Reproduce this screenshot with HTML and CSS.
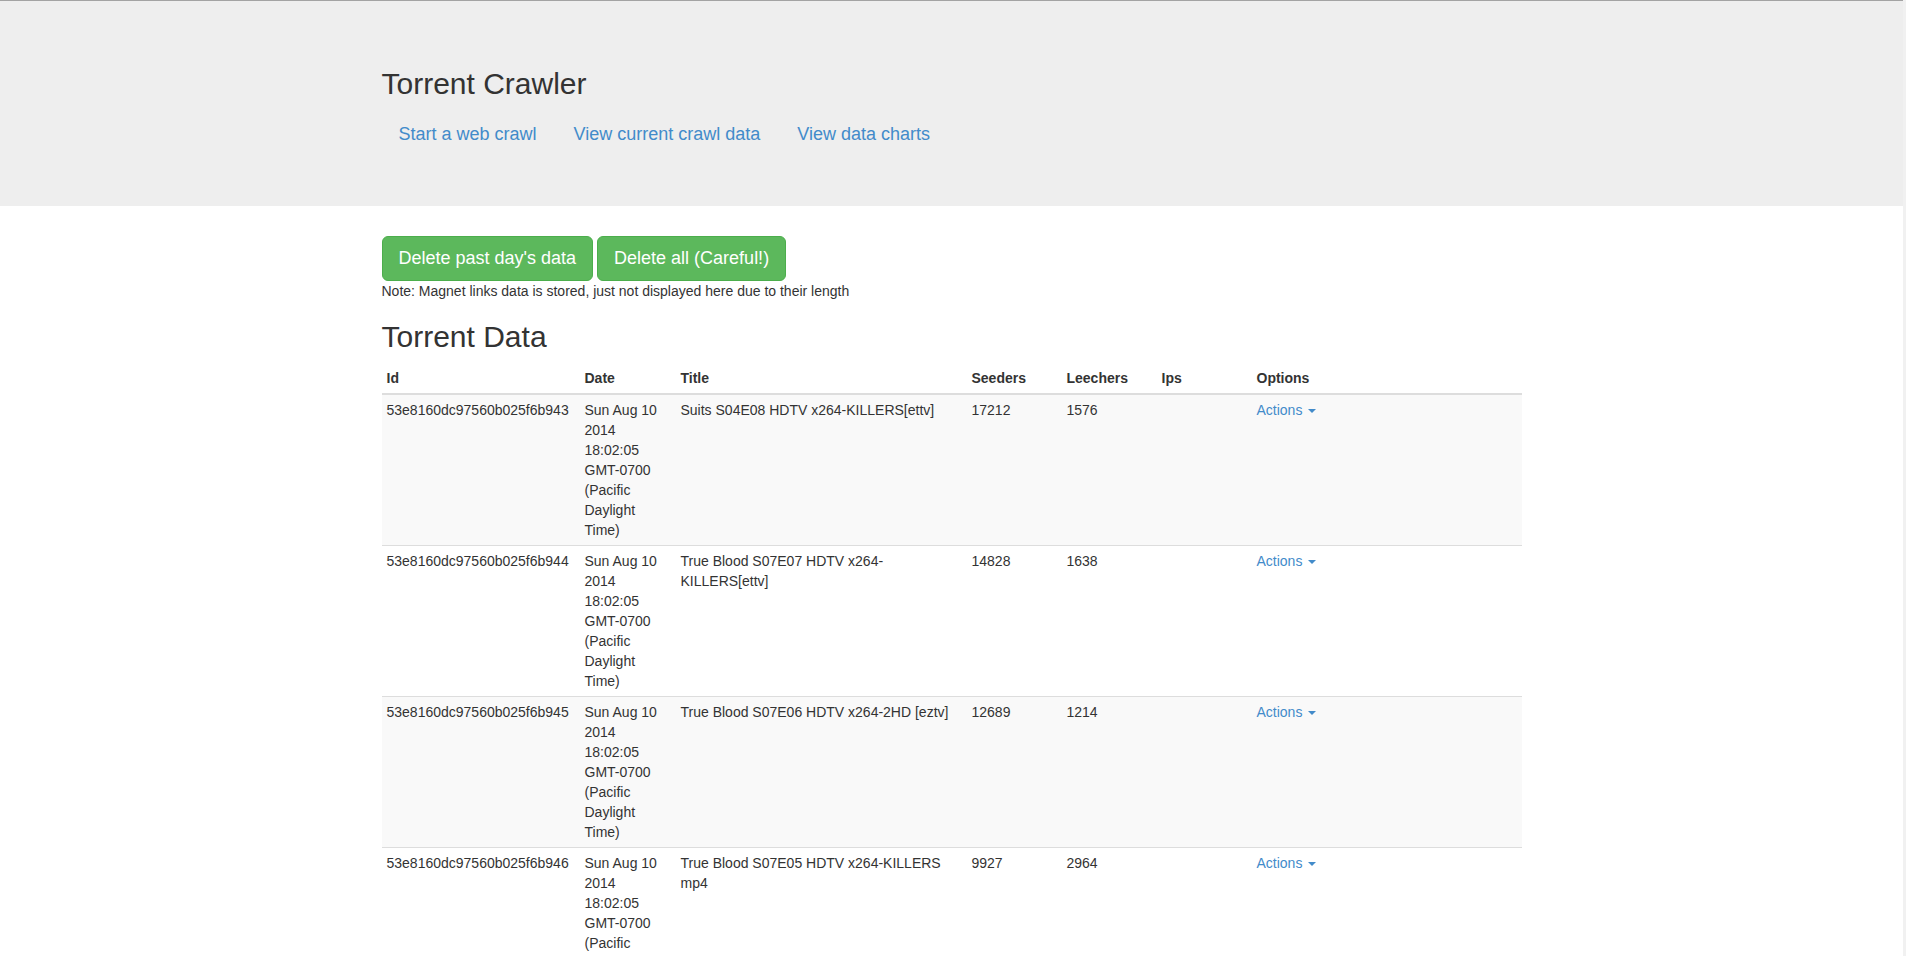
FILE: index.html
```html
<!DOCTYPE html>
<html lang="en">
<head>
<meta charset="utf-8">
<title>Torrent Crawler</title>
<link rel="stylesheet" href="styles.css">
</head>
<body>
<header class="jumbotron">
  <div class="container">
    <h1 class="site-title">Torrent Crawler</h1>
    <ul class="nav-links">
      <li><a href="#">Start a web crawl</a></li>
      <li><a href="#">View current crawl data</a></li>
      <li><a href="#">View data charts</a></li>
    </ul>
  </div>
</header>
<main class="container">
  <div class="btn-row">
    <button class="btn btn-success">Delete past day's data</button>
    <button class="btn btn-success">Delete all (Careful!)</button>
  </div>
  <p class="note">Note: Magnet links data is stored, just not displayed here due to their length</p>
  <h2 class="section-title">Torrent Data</h2>
  <table class="data-table">
    <colgroup>
      <col class="col-id"><col class="col-date"><col class="col-title"><col class="col-num"><col class="col-num"><col class="col-num"><col class="col-opt">
    </colgroup>
    <thead>
      <tr><th>Id</th><th>Date</th><th>Title</th><th>Seeders</th><th>Leechers</th><th>Ips</th><th>Options</th></tr>
    </thead>
    <tbody>
      <tr>
        <td>53e8160dc97560b025f6b943</td>
        <td>Sun Aug 10 2014 18:02:05 GMT-0700 (Pacific Daylight Time)</td>
        <td>Suits S04E08 HDTV x264-KILLERS[ettv]</td>
        <td>17212</td><td>1576</td><td></td>
        <td><a href="#" class="actions">Actions <span class="caret"></span></a></td>
      </tr>
      <tr>
        <td>53e8160dc97560b025f6b944</td>
        <td>Sun Aug 10 2014 18:02:05 GMT-0700 (Pacific Daylight Time)</td>
        <td>True Blood S07E07 HDTV x264-KILLERS[ettv]</td>
        <td>14828</td><td>1638</td><td></td>
        <td><a href="#" class="actions">Actions <span class="caret"></span></a></td>
      </tr>
      <tr>
        <td>53e8160dc97560b025f6b945</td>
        <td>Sun Aug 10 2014 18:02:05 GMT-0700 (Pacific Daylight Time)</td>
        <td>True Blood S07E06 HDTV x264-2HD [eztv]</td>
        <td>12689</td><td>1214</td><td></td>
        <td><a href="#" class="actions">Actions <span class="caret"></span></a></td>
      </tr>
      <tr>
        <td>53e8160dc97560b025f6b946</td>
        <td>Sun Aug 10 2014 18:02:05 GMT-0700 (Pacific Daylight Time)</td>
        <td>True Blood S07E05 HDTV x264-KILLERS mp4</td>
        <td>9927</td><td>2964</td><td></td>
        <td><a href="#" class="actions">Actions <span class="caret"></span></a></td>
      </tr>
      <tr>
        <td>53e8160dc97560b025f6b947</td>
        <td>Sun Aug 10 2014 18:02:05 GMT-0700 (Pacific Daylight Time)</td>
        <td>The Strain S01E05 HDTV x264-KILLERS[ettv]</td>
        <td>8731</td><td>2110</td><td></td>
        <td><a href="#" class="actions">Actions <span class="caret"></span></a></td>
      </tr>
      <tr>
        <td>53e8160dc97560b025f6b948</td>
        <td>Sun Aug 10 2014 18:02:05 GMT-0700 (Pacific Daylight Time)</td>
        <td>The Leftovers S01E07 HDTV x264-KILLERS[ettv]</td>
        <td>7354</td><td>1893</td><td></td>
        <td><a href="#" class="actions">Actions <span class="caret"></span></a></td>
      </tr>
    </tbody>
  </table>
</main>
</body>
</html>
```
FILE: styles.css
```css
* { box-sizing: border-box; }

html {
  margin: 0;
  padding: 0;
  background: #f1f1f1;
}

body {
  margin: 0 3px 0 0;
  padding: 0;
  font-family: "Liberation Sans", Arial, Helvetica, sans-serif;
  font-size: 14px;
  line-height: 20px;
  color: #333333;
  background: #ffffff;
  border-top: 1px solid #a3a3a3;
}

a { color: #428bca; text-decoration: none; }

.container {
  width: 1170px;
  margin: 0 auto;
  padding: 0 15px;
}

.jumbotron {
  background: #eeeeee;
  padding: 48px 0 49px;
  margin-bottom: 30px;
}

.site-title {
  font-size: 30px;
  font-weight: 500;
  line-height: 33px;
  margin: 18px 0 11px;
}

.nav-links {
  list-style: none;
  margin: 0;
  padding: 0;
  display: flex;
  gap: 3px;
}

.nav-links a {
  display: block;
  padding: 10px 17px;
  font-size: 18px;
  line-height: 26px;
}

.btn-row {
  display: flex;
  gap: 4px;
}

.btn {
  font-family: inherit;
  font-size: 18px;
  line-height: 23px;
  padding: 10px 16px;
  border-radius: 6px;
  border: 1px solid transparent;
  cursor: pointer;
}

.btn-success {
  color: #ffffff;
  background: #5cb85c;
  border-color: #4cae4c;
}

.note {
  margin: 0;
}

.section-title {
  font-size: 30px;
  font-weight: 500;
  line-height: 33px;
  margin: 19px 0 10px;
}

.data-table {
  width: 100%;
  table-layout: fixed;
  border-collapse: collapse;
  border-spacing: 0;
  margin-bottom: 20px;
}

.col-id { width: 198px; }
.col-date { width: 96px; }
.col-title { width: 291px; }
.col-num { width: 95px; }

.data-table th,
.data-table td {
  padding: 5px;
  text-align: left;
  line-height: 20px;
}

.data-table th {
  font-weight: bold;
  vertical-align: bottom;
  border-bottom: 2px solid #dddddd;
}

.data-table td {
  vertical-align: top;
  border-top: 1px solid #dddddd;
}

.data-table tbody tr:nth-child(odd) td {
  background: #f9f9f9;
}

.caret {
  display: inline-block;
  width: 0;
  height: 0;
  margin-left: 2px;
  vertical-align: middle;
  border-top: 4px solid #428bca;
  border-left: 4px solid transparent;
  border-right: 4px solid transparent;
}
```
